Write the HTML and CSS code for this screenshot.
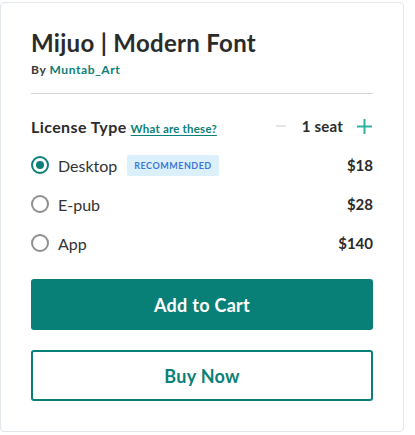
FILE: index.html
```html
<!DOCTYPE html>
<html>
<head>
<meta charset="utf-8">
<link rel="stylesheet" href="styles.css">
</head>
<body>
<div class="card">
  <h1 class="title">Mijuo | Modern Font</h1>
  <div class="byline">By <a class="author">Muntab_Art</a></div>
  <hr class="divider">
  <div class="license-head">
    <div class="lh-left">
      <span class="lh-title">License Type</span>
      <a class="lh-link">What are these?</a>
    </div>
    <div class="seats">
      <span class="minus"></span>
      <span class="seat-count">1 seat</span>
      <svg class="plus" width="15" height="15" viewBox="0 0 15 15"><path d="M7.5 0V15M0 7.5H15" stroke="#2eb3a1" stroke-width="2"/></svg>
    </div>
  </div>
  <div class="options">
    <div class="option">
      <span class="radio checked"></span>
      <span class="opt-name">Desktop</span>
      <span class="badge">RECOMMENDED</span>
      <span class="price">$18</span>
    </div>
    <div class="option">
      <span class="radio"></span>
      <span class="opt-name">E-pub</span>
      <span class="price">$28</span>
    </div>
    <div class="option">
      <span class="radio"></span>
      <span class="opt-name">App</span>
      <span class="price">$140</span>
    </div>
  </div>
  <button class="btn btn-primary">Add to Cart</button>
  <button class="btn btn-outline">Buy Now</button>
</div>
</body>
</html>
```
FILE: styles.css
```css
* { box-sizing: border-box; }
body {
  margin: 0;
  font-family: "Lato", "Noto Sans", sans-serif;
  color: #2d2d2d;
  background: #fff;
}
.card {
  margin-top: 2px;
  width: 404px;
  height: 430px;
  border: 1px solid #e2e7ec;
  border-radius: 4px;
  padding: 26px 30px 0 30px;
}
.title {
  margin: 0;
  font-size: 24px;
  font-weight: 700;
  line-height: 28px;
  letter-spacing: 0.3px;
  color: #2b2b2b;
}
.byline {
  margin-top: 6px;
  font-size: 12px;
  line-height: 14px;
  font-weight: 700;
  letter-spacing: 0.6px;
  color: #3a3a3a;
}
.author { color: #0a8079; }
.divider {
  margin: 16px 0 0 0;
  border: 0;
  border-top: 1px solid #d4d4d4;
}
.license-head {
  margin-top: 22px;
  display: flex;
  justify-content: space-between;
  align-items: center;
  height: 20px;
}
.lh-left { display: flex; align-items: baseline; gap: 4px; }
.lh-title { font-size: 16px; font-weight: 700; letter-spacing: 0.4px; color: #2b2b2b; }
.lh-link {
  font-size: 11.5px;
  font-weight: 700;
  color: #0a8079;
  letter-spacing: 0.2px;
  text-decoration: underline;
  text-underline-offset: 2px;
}
.seats { display: flex; align-items: center; }
.minus { width: 10px; height: 2px; background: #e2e6ea; }
.seat-count { margin-left: 16px; font-size: 15px; font-weight: 700; letter-spacing: 0.2px; color: #2b2b2b; }
.plus { margin-left: 14px; margin-right: 1px; }
.options { margin-top: 20px; display: flex; flex-direction: column; gap: 21px; }
.option { display: flex; align-items: center; height: 18px; }
.radio {
  width: 18px; height: 18px;
  border: 2px solid #8f8f8f;
  border-radius: 50%;
  display: flex; align-items: center; justify-content: center;
}
.radio.checked { border-color: #0a8079; }
.radio.checked::after {
  content: "";
  width: 8px; height: 8px;
  border-radius: 50%;
  background: #0a8079;
}
.opt-name { margin-left: 9px; font-size: 16px; color: #333; }
.badge {
  margin-left: 10px;
  background: #dcf0fb;
  color: #3d78d8;
  font-size: 9px;
  font-weight: 700;
  letter-spacing: 0.5px;
  padding: 5px 7px;
  border-radius: 2px;
}
.price { margin-left: auto; font-size: 15px; font-weight: 700; color: #2b2b2b; }
.btn {
  display: block;
  width: 100%;
  height: 51px;
  border-radius: 3px;
  font-family: inherit;
  font-size: 18px;
  font-weight: 700;
  letter-spacing: 0.3px;
  cursor: pointer;
}
.btn-primary {
  margin-top: 27px;
  background: #098077;
  color: #fff;
  border: 0;
}
.btn-outline {
  margin-top: 20px;
  background: #fff;
  color: #098077;
  border: 2px solid #098077;
}
```
